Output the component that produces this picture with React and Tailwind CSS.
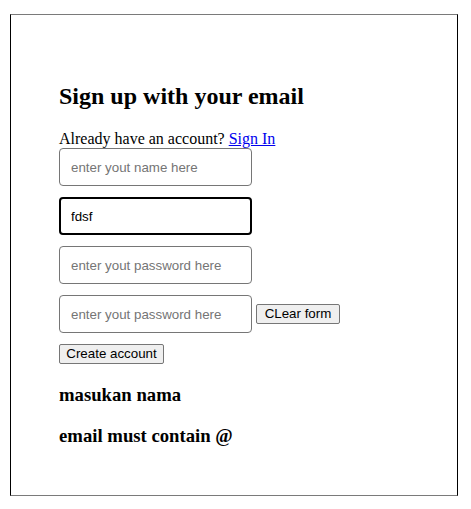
export default function App() {
  const inputCls =
    "block w-[193px] h-[38px] rounded-[4px] border border-[#767676] pl-[11px] pr-2 text-[13.33px] text-black placeholder:text-[#757575] outline-none bg-white";
  const btnCls =
    "block h-[20px] px-[6px] border border-[#767676] rounded-[2px] bg-[#efefef] text-[13.33px] leading-[16px] text-black";
  return (
    <div className="w-[471px] h-[509px] bg-white pt-[14px] pl-[10px]" style={{ fontFamily: '"Liberation Serif", "Times New Roman", serif' }}>
      <div className="w-[448px] h-[482px] border-x border-x-black border-y border-y-[#7a7a7a] pl-[48px] pt-[68px]">
        <h2 className="text-[24px] leading-[27.6px] font-bold text-black">Sign up with your email</h2>
        <p className="mt-[19px] text-[16px] leading-[18.4px] text-black">
          Already have an account?{" "}
          <a href="#" className="text-[#0000ee] underline">Sign In</a>
        </p>
        <form
          className="flex flex-col gap-[11px]"
          style={{ fontFamily: '"Liberation Sans", Arial, sans-serif' }}
          onSubmit={(e) => e.preventDefault()}
        >
          <input className={inputCls} placeholder="enter yout name here" />
          <input
            className="block w-[193px] h-[38px] rounded-[4px] border-2 border-black pl-[10px] pr-2 text-[13.33px] text-black outline-none bg-white"
            defaultValue="fdsf"
          />
          <input className={inputCls} type="password" placeholder="enter yout password here" />
          <div className="flex items-center gap-[4px]">
            <input className={inputCls} type="password" placeholder="enter yout password here" />
            <button type="button" className={btnCls + " w-[84px]"}>CLear form</button>
          </div>
          <div className="flex">
            <button type="submit" className={btnCls + " w-[105px]"}>Create account</button>
          </div>
        </form>
        <h3 className="mt-[20px] text-[18.72px] leading-[21.5px] font-bold text-black">masukan nama</h3>
        <h3 className="mt-[19px] text-[18.72px] leading-[21.5px] font-bold text-black">email must contain @</h3>
      </div>
    </div>
  );
}
